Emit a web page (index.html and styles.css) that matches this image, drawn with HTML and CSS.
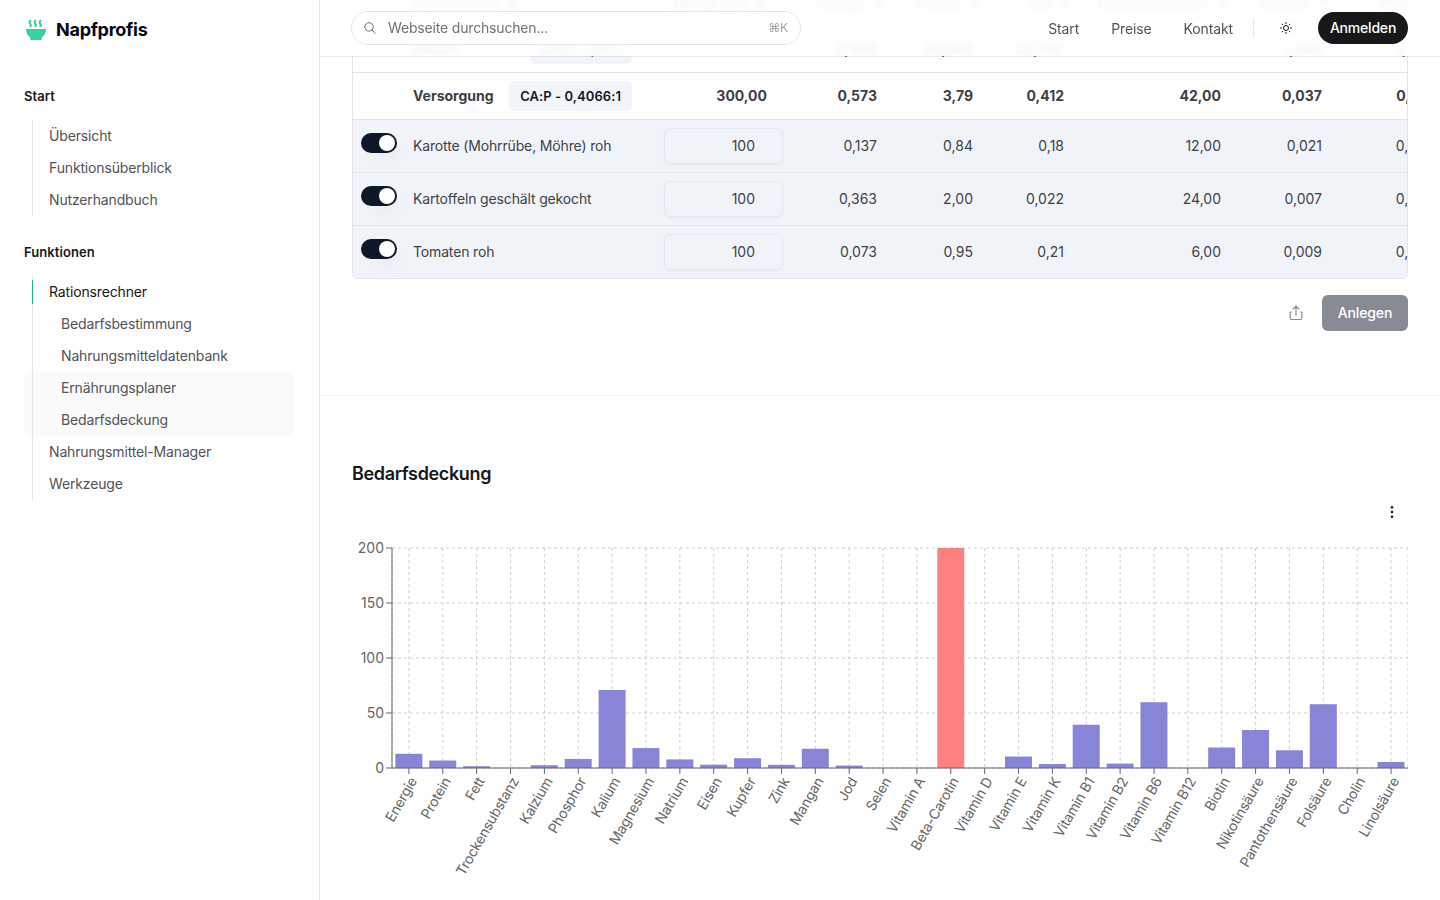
FILE: index.html
```html
<!DOCTYPE html>
<html lang="de">
<head>
    <meta charset="UTF-8">
    <meta name="viewport" content="width=device-width, initial-scale=1.0">
    <title>Napfprofis</title>
    <link rel="stylesheet" href="styles.css">
</head>
<body>

<div class="layout">
    <aside class="sidebar">
        <a class="logo">
            <svg width="24" height="24" viewBox="0 0 24 24">
                <path d="M2 11h20c0 4-1.700 6.800-4.200 8.300V22H6.200v-2.700C3.700 17.800 2 15 2 11z" fill="#34d399"/>
                <path d="M7 2.200c-1.800 1.700-1.800 2.500-.8 3.500s1 1.800-.2 3.300M12 2.200c-1.800 1.700-1.800 2.500-.8 3.500s1 1.800-.2 3.300M17 2.200c-1.800 1.700-1.800 2.500-.8 3.500s1 1.800-.2 3.300" fill="none" stroke="#34d399" stroke-width="2"/>
            </svg>
            <span>Napfprofis</span>
        </a>

        <nav>
            <h2 class="nav-title">Start</h2>
            <ul class="nav-list">
                <li>Übersicht</li>
                <li>Funktionsüberblick</li>
                <li>Nutzerhandbuch</li>
            </ul>

            <h2 class="nav-title">Funktionen</h2>
            <ul class="nav-list">
                <li class="active">Rationsrechner</li>
                <li class="sub">Bedarfsbestimmung</li>
                <li class="sub">Nahrungsmitteldatenbank</li>
                <li class="sub visible first">Ernährungsplaner</li>
                <li class="sub visible last">Bedarfsdeckung</li>
                <li>Nahrungsmittel-Manager</li>
                <li>Werkzeuge</li>
            </ul>
        </nav>
    </aside>

    <div class="content">
        <header class="topbar">
            <button type="button" class="search">
                <svg width="20" height="20" viewBox="0 0 20 20" fill="none" stroke="#71717a">
                    <path stroke-linecap="round" stroke-linejoin="round" d="M12.010 12a4.250 4.250 0 1 0-6.020-6 4.250 4.250 0 0 0 6.020 6Zm0 0 3.240 3.250"/>
                </svg>
                <span class="search-text">Webseite durchsuchen...</span>
                <kbd>⌘K</kbd>
            </button>
            <nav class="top-links">
                <a>Start</a>
                <a>Preise</a>
                <a>Kontakt</a>
            </nav>
            <div class="divider"></div>
            <svg class="sun" width="20" height="20" viewBox="0 0 20 20" fill="none" stroke="#18181b">
                <path d="M12.500 10a2.500 2.500 0 1 1-5 0 2.500 2.500 0 0 1 5 0Z"/>
                <path stroke-linecap="round" d="M10 5.500v-1M13.182 6.818l.707-.707M14.500 10h1M13.182 13.182l.707.707M10 15.500v-1M6.110 13.889l.708-.707M4.500 10h1M6.110 6.111l.708.707"/>
            </svg>
            <button type="button" class="login">Anmelden</button>
        </header>

        <main>
            <section class="planner">
                <div class="table">
                    <div class="row head">
                        <span></span><span class="name">Bezeichnung &nbsp;⇅</span><span class="amount">Menge in g &nbsp;⇅</span>
                        <span>Energie &nbsp;⇅</span><span>Protein &nbsp;⇅</span><span>Fett &nbsp;⇅</span><span>Trockensubstanz &nbsp;⇅</span><span>Kalzium &nbsp;⇅</span><span>Phosphor</span>
                    </div>
                    <div class="row total">
                        <span></span><span class="name">Bedarf <b class="badge">CA:P - 1,35:1</b></span><span class="amount"></span>
                        <span>4,408</span><span>54,928</span><span>25,750</span><span></span><span>1,480</span><span>1,096</span>
                    </div>
                    <div class="row total">
                        <span></span><span class="name">Versorgung <b class="badge">CA:P - 0,4066:1</b></span><span class="amount">300,00</span>
                        <span>0,573</span><span>3,79</span><span>0,412</span><span>42,00</span><span>0,037</span><span>0,091</span>
                    </div>
                    <div class="row item">
                        <span><i class="switch"></i></span><span class="name">Karotte (Mohrrübe, Möhre) roh</span><span class="amount"><span class="field">100</span></span>
                        <span>0,137</span><span>0,84</span><span>0,18</span><span>12,00</span><span>0,021</span><span>0,036</span>
                    </div>
                    <div class="row item">
                        <span><i class="switch"></i></span><span class="name">Kartoffeln geschält gekocht</span><span class="amount"><span class="field">100</span></span>
                        <span>0,363</span><span>2,00</span><span>0,022</span><span>24,00</span><span>0,007</span><span>0,038</span>
                    </div>
                    <div class="row item">
                        <span><i class="switch"></i></span><span class="name">Tomaten roh</span><span class="amount"><span class="field">100</span></span>
                        <span>0,073</span><span>0,95</span><span>0,21</span><span>6,00</span><span>0,009</span><span>0,026</span>
                    </div>
                </div>
                <div class="actions">
                    <svg width="16" height="16" viewBox="0 0 16 16" fill="none" stroke="#8b8b8b" stroke-width="1.200" stroke-linecap="round" stroke-linejoin="round">
                        <path d="M8 10V1.300M5.200 4 8 1.200 10.800 4M2.200 7v6.300a1.200 1.200 0 0 0 1.200 1.200h9.200a1.200 1.200 0 0 0 1.200-1.200V7M2.200 7h1.300M12.500 7h1.300"/>
                    </svg>
                    <button type="button" class="create">Anlegen</button>
                </div>
            </section>

            <section class="coverage">
                <h2>Bedarfsdeckung</h2>
                <div class="chart-menu">
                    <svg width="16" height="16" viewBox="0 0 16 16" fill="#18181b">
                        <circle cx="8" cy="3.300" r="1.300"/><circle cx="8" cy="8" r="1.300"/><circle cx="8" cy="12.700" r="1.300"/>
                    </svg>
                </div>
                <svg id="chart" class="chart" width="1056" height="352" viewBox="0 0 1056 352"></svg>
            </section>
        </main>
    </div>
</div>

<script src="script.js"></script>
</body>
</html>
```
FILE: styles.css
```css
* {
    box-sizing: border-box;
}

body {
    margin: 0;
    font-family: Inter, "Liberation Sans", sans-serif;
    font-size: 14px;
    line-height: 24px;
    letter-spacing: -.15px;
    color: #3f3f46;
    background: #fff;
}

h2, ul {
    margin: 0;
    padding: 0;
    list-style: none;
}

button {
    font: inherit;
    letter-spacing: inherit;
    border: none;
    cursor: pointer;
}

.layout {
    display: flex;
    height: 900px;
    overflow: hidden;
}

/* Sidebar */
.sidebar {
    width: 320px;
    flex: none;
    padding: 18px 24px;
    border-right: 1px solid #e4e4e7;
}

.logo {
    display: flex;
    align-items: center;
    gap: 8px;
    margin-bottom: 42px;
    font-size: 18px;
    font-weight: 700;
    letter-spacing: -.27px;
    color: #020617;
}

.nav-title {
    font-size: 13px;
    font-weight: 600;
    line-height: 24px;
    letter-spacing: .08px;
    color: #18181b;
}

.nav-list {
    display: flow-root;
    margin: 12px 0 24px 8px;
    border-left: 1px solid #e4e4e7;
}

.nav-list li {
    height: 32px;
    padding: 4px 0 4px 16px;
    color: #52525b;
}

.nav-list .sub {
    padding-left: 28px;
}

.nav-list .active {
    height: 24px;
    margin: 4px 0 4px -1px;
    padding-top: 0;
    padding-bottom: 0;
    border-left: 1px solid #10b981;
    color: #18181b;
}

.nav-list .visible {
    margin-left: -9px;
    padding-left: 37px;
    background: linear-gradient(#e4e4e7, #e4e4e7) 8px 0 / 1px 100% no-repeat #fafafa;
}

.nav-list .first {
    border-radius: 8px 8px 0 0;
}

.nav-list .last {
    border-radius: 0 0 8px 8px;
}

.content {
    flex: 1;
    min-width: 0;
}

/* Top bar */
.topbar {
    position: sticky;
    top: 0;
    z-index: 2;
    display: flex;
    align-items: center;
    height: 56px;
    padding: 0 32px 1px 31px;
    box-shadow: 0 1px rgba(24, 24, 27, .09);
    background: rgba(255, 255, 255, .93);
    backdrop-filter: blur(4px);
}

.search {
    display: flex;
    align-items: center;
    width: 450px;
    height: 34px;
    padding: 0 12px 0 8px;
    border: 1px solid #e4e4e7;
    border-radius: 17px;
    background: #fff;
    color: #71717a;
}

.search-text {
    margin-left: 8px;
    letter-spacing: -.17px;
}

.search kbd {
    margin-left: auto;
    font: 12px Inter, "DejaVu Sans", sans-serif;
    color: #a1a1aa;
}

.top-links {
    display: flex;
    gap: 32px;
    margin-left: auto;
    padding-top: 2px;
    color: #52525b;
    letter-spacing: -.12px;
}

.divider {
    width: 1px;
    height: 20px;
    margin: 0 22px 0 20px;
    background: #e7e7e9;
}

.login {
    width: 90px;
    height: 32px;
    margin-left: 22px;
    padding: 0;
    border-radius: 16px;
    background: #18181b;
    color: #fff;
    font-weight: 500;
    letter-spacing: -.2px;
}

.planner {
    height: 419px;
    margin-top: -79px;
    padding: 0 32px;
    border-bottom: 1px solid #f4f4f5;
}

.table {
    overflow: hidden;
    border: 1px solid #e4e4e7;
    border-radius: 6px;
}

.row {
    display: grid;
    grid-template-columns: 52px 235px 151px 94px 96px 91px 157px 101px 112px;
    align-items: center;
    width: 1089px;
    height: 47px;
    border-bottom: 1px solid #e4e4e7;
    text-align: right;
    letter-spacing: 0;
}

.row > span {
    padding: 0 8px;
}

.row > .name {
    display: flex;
    align-items: center;
    justify-content: space-between;
}

.row > .amount {
    padding: 0 24px 0 16px;
}

.head {
    height: 48px;
    padding-top: 6px;
    white-space: nowrap;
}

.head > span {
    padding-right: 0;
}

.head > .name {
    justify-content: flex-start;
}

.total {
    font-weight: 700;
}

.badge {
    padding: 3px 11px;
    border-radius: 6px;
    background: #f1f5f9;
    color: #0f172a;
    font-size: 13px;
    font-weight: 600;
    letter-spacing: .07px;
}

.item {
    height: 53px;
    background: #f0f4f9;
}

.item > .name {
    letter-spacing: -.15px;
}

.item:last-child {
    height: 52px;
    border-bottom: none;
}

.item > .amount {
    padding: 0 8px 0 24px;
}

.field {
    display: block;
    height: 36px;
    padding: 5px 27px;
    border: 1px solid #e2e8f0;
    border-radius: 6px;
    box-shadow: 0 1px 2px rgba(0, 0, 0, .05);
}

.switch {
    display: block;
    width: 36px;
    height: 20px;
    margin-bottom: 6px;
    padding: 2px;
    border-radius: 10px;
    background: #0f172a;
}

.switch::after {
    content: "";
    display: block;
    width: 16px;
    height: 16px;
    margin-left: auto;
    border-radius: 50%;
    background: #fff;
    box-shadow: 0 10px 15px -3px rgba(0, 0, 0, .1), 0 4px 6px -4px rgba(0, 0, 0, .1);
}

.actions {
    display: flex;
    align-items: center;
    justify-content: flex-end;
    gap: 18px;
    margin-top: 16px;
}

.create {
    width: 86px;
    height: 36px;
    padding: 0;
    border-radius: 6px;
    background: #878b94;
    color: #fff;
    font-weight: 500;
}

/* Chart */
.coverage {
    padding: 64px 32px 0;
}

.coverage h2 {
    font-size: 18px;
    font-weight: 600;
    line-height: 28px;
    letter-spacing: -.35px;
    color: #18181b;
}

.chart-menu {
    display: flex;
    justify-content: flex-end;
    padding: 16px 8px 0;
    height: 52px;
}

.chart {
    display: block;
    font-size: 14px;
    letter-spacing: 0;
    fill: #666;
}

.grid {
    stroke: #ccc;
    stroke-dasharray: 3 3;
}

.axis {
    stroke: #666;
}

.bar {
    fill: #8884d8;
}

.bar.over {
    fill: #ff8080;
}

.label {
    letter-spacing: -.22px;
}
```
FILE: script.js
```js
const data = [
    ['Energie', 12.9], ['Protein', 6.8], ['Fett', 1.6], ['Trockensubstanz', 0], ['Kalzium', 2.5],
    ['Phosphor', 8.2], ['Kalium', 70.9], ['Magnesium', 18.1], ['Natrium', 7.8], ['Eisen', 3],
    ['Kupfer', 8.9], ['Zink', 2.9], ['Mangan', 17.5], ['Jod', 2.2], ['Selen', 0],
    ['Vitamin A', 0], ['Beta-Carotin', 200], ['Vitamin D', 0], ['Vitamin E', 10.4], ['Vitamin K', 3.6],
    ['Vitamin B1', 39.3], ['Vitamin B2', 4], ['Vitamin B6', 59.8], ['Vitamin B12', 0], ['Biotin', 18.6],
    ['Nikotinsäure', 34.5], ['Pantothensäure', 16.1], ['Folsäure', 58], ['Cholin', 0], ['Linolsäure', 5.5]
];

// Plot area inside the svg
const left = 40;
const right = 1056;
const offset = 8;
const height = 220;
const bottom = offset + height;
const band = (right - left) / data.length;

function line(cls, x1, y1, x2, y2) {
    return `<line class="${cls}" x1="${x1}" y1="${y1}" x2="${x2}" y2="${y2}"/>`;
}

let out = '';

// Grid
for (let v = 0; v <= 200; v += 50) {
    const y = bottom - v / 200 * height;
    out += line('grid', left, y, right, y);
}
out += line('grid', left, offset, left, bottom);
out += line('grid', right, offset, right, bottom);
data.forEach((d, i) => {
    const x = left + band * (i + 0.5);
    out += line('grid', x, offset, x, bottom);
});

// Bars
data.forEach(([name, value], i) => {
    const h = value / 200 * height;
    const cls = value >= 100 ? 'bar over' : 'bar';
    out += `<rect class="${cls}" x="${left + band * (i + 0.1)}" y="${bottom - h}" width="27" height="${h}"/>`;
});

// Axes
out += line('axis', left, offset, left, bottom);
out += line('axis', left, bottom, right, bottom);
for (let v = 0; v <= 200; v += 50) {
    const y = bottom - v / 200 * height;
    out += line('axis', left - 6, y, left, y);
    out += `<text x="${left - 8}" y="${y}" dy="0.355em" text-anchor="end">${v}</text>`;
}
data.forEach(([name], i) => {
    const x = left + band * (i + 0.5);
    out += line('axis', x, bottom, x, bottom + 6);
    out += `<text class="label" x="${x}" y="${bottom + 8}" dy="0.71em" text-anchor="end" transform="rotate(-60, ${x}, ${bottom + 8})">${name}</text>`;
});

document.getElementById('chart').innerHTML = out;
```
